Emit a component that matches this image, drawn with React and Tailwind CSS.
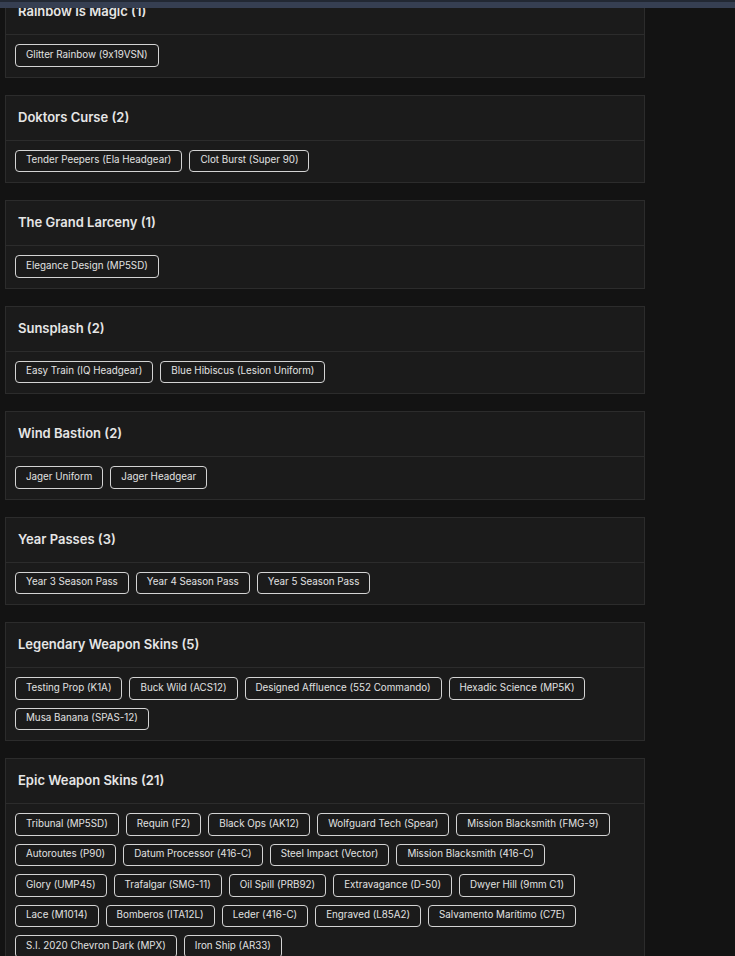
import React from 'react'

const SETS = [
  { name: 'Rainbow Is Magic', items: ['Glitter Rainbow (9x19VSN)'] },
  { name: 'Doktors Curse', items: ['Tender Peepers (Ela Headgear)', 'Clot Burst (Super 90)'] },
  { name: 'The Grand Larceny', items: ['Elegance Design (MP5SD)'] },
  { name: 'Sunsplash', items: ['Easy Train (IQ Headgear)', 'Blue Hibiscus (Lesion Uniform)'] },
  { name: 'Wind Bastion', items: ['Jager Uniform', 'Jager Headgear'] },
  { name: 'Year Passes', items: ['Year 3 Season Pass', 'Year 4 Season Pass', 'Year 5 Season Pass'] },
  {
    name: 'Legendary Weapon Skins',
    items: ['Testing Prop (K1A)', 'Buck Wild (ACS12)', 'Designed Affluence (552 Commando)', 'Hexadic Science (MP5K)', 'Musa Banana (SPAS-12)'],
  },
  {
    name: 'Epic Weapon Skins',
    items: [
      'Tribunal (MP5SD)', 'Requin (F2)', 'Black Ops (AK12)', 'Wolfguard Tech (Spear)', 'Mission Blacksmith (FMG-9)',
      'Autoroutes (P90)', 'Datum Processor (416-C)', 'Steel Impact (Vector)', 'Mission Blacksmith (416-C)',
      'Glory (UMP45)', 'Trafalgar (SMG-11)', 'Oil Spill (PRB92)', 'Extravagance (D-50)', 'Dwyer Hill (9mm C1)',
      'Lace (M1014)', 'Bomberos (ITA12L)', 'Leder (416-C)', 'Engraved (L85A2)', 'Salvamento Marítimo (C7E)',
      'S.I. 2020 Chevron Dark (MPX)', 'Iron Ship (AR33)',
    ],
  },
]

function SetCard({ set }) {
  return (
    <div className="bg-[#1b1b1b] border border-[#2c2c2c]">
      <div className="h-[45px] px-3 flex items-center border-b border-[#2c2c2c]">
        <h3 className="text-[13px] font-semibold text-[#e6e6e6]">{set.name} ({set.items.length})</h3>
      </div>
      <div className="pt-[9px] pb-[10px] px-[9px] flex flex-wrap gap-x-[7px] gap-y-2">
        {set.items.map(it => (
          <span key={it}
            className="h-[22.5px] px-[10px] flex items-center rounded-[4px] border border-[#d4d4d4] text-[9.8px] text-[#e2e2e2] whitespace-nowrap [font-feature-settings:'calt'_0]">
            {it}
          </span>
        ))}
      </div>
    </div>
  )
}

export default function App() {
  return (
    <div className="relative h-[956px] overflow-hidden bg-[#131313]" style={{ fontFamily: 'Inter, "Open Sans", sans-serif' }}>
      {/* header strip over the scrolled list */}
      <div className="absolute top-0 left-0 right-0 h-2 z-10 bg-[#363f52] border-t-2 border-[#222833]" />
      <div className="w-[640px] ml-[5px] -mt-[11px] flex flex-col gap-[17px]">
        {SETS.map(s => <SetCard key={s.name} set={s} />)}
      </div>
    </div>
  )
}
